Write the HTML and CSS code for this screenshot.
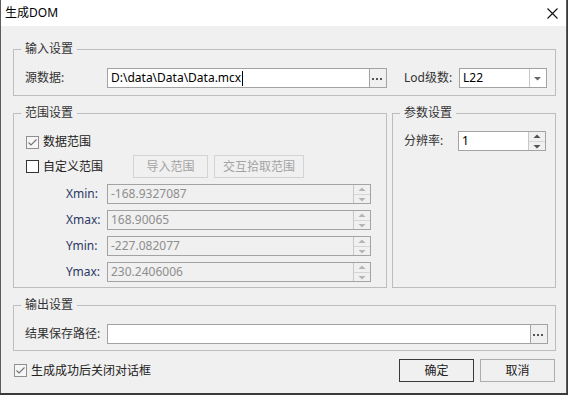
FILE: index.html
```html
<!DOCTYPE html>
<html lang="zh-CN">
<head>
<meta charset="UTF-8">
<title>生成DOM</title>
<link rel="stylesheet" href="styles.css">
</head>
<body>

<div class="dialog">
    <div class="titlebar">
        <span class="title">生成DOM</span>
        <svg class="close" width="11" height="11" viewBox="0 0 11 11">
            <path d="M0.5 0.5 L10.5 10.5 M10.5 0.5 L0.5 10.5" stroke="#111" stroke-width="1.1" fill="none"/>
        </svg>
    </div>

    <div class="content">
        <!-- 输入设置 -->
        <fieldset class="group">
            <legend>输入设置</legend>
            <div class="group-body input-body">
                <span class="label src-label">源数据:</span>
                <div class="field src-field">
                    <span class="field-text">D:\data\Data\Data.mcx</span><span class="caret"></span>
                    <span class="side browse">
                        <svg width="16" height="18" viewBox="0 0 16 18"><rect x="2" y="9" width="2" height="2" fill="#555"/><rect x="6" y="9" width="2" height="2" fill="#555"/><rect x="10" y="9" width="2" height="2" fill="#555"/></svg>
                    </span>
                </div>
                <span class="label lod-label">Lod级数:</span>
                <div class="field lod-field">
                    <span class="field-text">L22</span>
                    <span class="side combo-arrow">
                        <svg width="16" height="18" viewBox="0 0 16 18"><path d="M4 8 H11 L7.5 11.5 Z" fill="#666"/></svg>
                    </span>
                </div>
            </div>
        </fieldset>

        <div class="middle">
            <!-- 范围设置 -->
            <fieldset class="group range-group">
                <legend>范围设置</legend>
                <div class="group-body range-body">
                    <div class="check-row">
                        <span class="check on">
                            <svg width="11" height="11" viewBox="0 0 11 11"><path d="M1.5 5.5 L4 8 L9.5 2.5" stroke="#777" stroke-width="1.2" fill="none"/></svg>
                        </span>
                        <span class="check-text">数据范围</span>
                    </div>
                    <div class="check-row custom-row">
                        <div class="custom-check">
                            <span class="check off"></span>
                            <span class="check-text">自定义范围</span>
                        </div>
                        <span class="btn disabled import-btn">导入范围</span>
                        <span class="btn disabled pick-btn">交互拾取范围</span>
                    </div>
                    <div class="coord-row">
                        <span class="coord-label">Xmin:</span>
                        <div class="field coord-field disabled">
                            <span class="field-text">-168.9327087</span>
                            <span class="side spin"><span class="spin-half"><svg width="16" height="9" viewBox="0 0 16 9"><path d="M4.5 6 H11.5 L8 2.5 Z" fill="#b4b4b4"/></svg></span><span class="spin-half"><svg width="16" height="9" viewBox="0 0 16 9"><path d="M4.5 3 H11.5 L8 6.5 Z" fill="#b4b4b4"/></svg></span></span>
                        </div>
                    </div>
                    <div class="coord-row">
                        <span class="coord-label">Xmax:</span>
                        <div class="field coord-field disabled">
                            <span class="field-text">168.90065</span>
                            <span class="side spin"><span class="spin-half"><svg width="16" height="9" viewBox="0 0 16 9"><path d="M4.5 6 H11.5 L8 2.5 Z" fill="#b4b4b4"/></svg></span><span class="spin-half"><svg width="16" height="9" viewBox="0 0 16 9"><path d="M4.5 3 H11.5 L8 6.5 Z" fill="#b4b4b4"/></svg></span></span>
                        </div>
                    </div>
                    <div class="coord-row">
                        <span class="coord-label">Ymin:</span>
                        <div class="field coord-field disabled">
                            <span class="field-text">-227.082077</span>
                            <span class="side spin"><span class="spin-half"><svg width="16" height="9" viewBox="0 0 16 9"><path d="M4.5 6 H11.5 L8 2.5 Z" fill="#b4b4b4"/></svg></span><span class="spin-half"><svg width="16" height="9" viewBox="0 0 16 9"><path d="M4.5 3 H11.5 L8 6.5 Z" fill="#b4b4b4"/></svg></span></span>
                        </div>
                    </div>
                    <div class="coord-row">
                        <span class="coord-label">Ymax:</span>
                        <div class="field coord-field disabled">
                            <span class="field-text">230.2406006</span>
                            <span class="side spin"><span class="spin-half"><svg width="16" height="9" viewBox="0 0 16 9"><path d="M4.5 6 H11.5 L8 2.5 Z" fill="#b4b4b4"/></svg></span><span class="spin-half"><svg width="16" height="9" viewBox="0 0 16 9"><path d="M4.5 3 H11.5 L8 6.5 Z" fill="#b4b4b4"/></svg></span></span>
                        </div>
                    </div>
                </div>
            </fieldset>

            <!-- 参数设置 -->
            <fieldset class="group param-group">
                <legend>参数设置</legend>
                <div class="group-body param-body">
                    <span class="label res-label">分辨率:</span>
                    <div class="field res-field">
                        <span class="field-text">1</span>
                        <span class="side spin"><span class="spin-half"><svg width="16" height="9" viewBox="0 0 16 9"><path d="M4.5 6 H11.5 L8 2.5 Z" fill="#505050"/></svg></span><span class="spin-half"><svg width="16" height="9" viewBox="0 0 16 9"><path d="M4.5 3 H11.5 L8 6.5 Z" fill="#505050"/></svg></span></span>
                    </div>
                </div>
            </fieldset>
        </div>

        <!-- 输出设置 -->
        <fieldset class="group output-group">
            <legend>输出设置</legend>
            <div class="group-body output-body">
                <span class="label src-label">结果保存路径:</span>
                <div class="field out-field">
                    <span class="field-text"></span>
                    <span class="side browse">
                        <svg width="16" height="18" viewBox="0 0 16 18"><rect x="2" y="9" width="2" height="2" fill="#555"/><rect x="6" y="9" width="2" height="2" fill="#555"/><rect x="10" y="9" width="2" height="2" fill="#555"/></svg>
                    </span>
                </div>
            </div>
        </fieldset>

        <div class="footer">
            <div class="close-check">
                <span class="check on">
                    <svg width="11" height="11" viewBox="0 0 11 11"><path d="M1.5 5.5 L4 8 L9.5 2.5" stroke="#777" stroke-width="1.2" fill="none"/></svg>
                </span>
                <span class="check-text">生成成功后关闭对话框</span>
            </div>
            <div class="footer-buttons">
                <span class="btn default">确定</span>
                <span class="btn">取消</span>
            </div>
        </div>
    </div>
</div>

</body>
</html>
```

FILE: styles.css
```css
html, body {
    margin: 0;
    padding: 0;
}
body {
    background: #3a3a3a;
    font-family: "Noto Sans", "Noto Sans CJK SC", sans-serif;
    font-size: 12px;
    color: #222;
}
.dialog {
    width: 567px;
    height: 393px;
    box-sizing: border-box;
    border-left: 1px solid #5c5c5c;
    border-right: 1px solid #5c5c5c;
    background: #f0f0f0;
}
.titlebar {
    height: 26px;
    background: #fff;
    display: flex;
    align-items: center;
    justify-content: space-between;
    padding-left: 4px;
}
.title {
    line-height: 16px;
    color: #000;
}
.close {
    margin-right: 8px;
}
.content {
    padding: 0 10px 0 12px;
}

/* group boxes */
.group {
    margin: 15px 0 0 0;
    padding: 0;
    border: 1px solid #bdbdbd;
    min-width: 0;
}
.group legend {
    margin-left: 7px;
    padding: 0 4px;
    line-height: 16px;
    color: #333;
}
.group-body {
    display: flex;
    align-items: center;
}
.input-body {
    padding: 11px 7px 7px 11px;
}
.middle {
    display: flex;
    gap: 5px;
    margin-top: 9px;
}
.middle .group {
    margin-top: 0;
}
.range-group {
    width: 374px;
    box-sizing: border-box;
}
.param-group {
    flex: 1;
}
.range-body {
    flex-direction: column;
    align-items: flex-start;
    padding: 11px 0 5px 12px;
}
.param-body {
    padding: 10px 0 0 11px;
}
.output-group {
    margin-top: 9px;
}
.output-body {
    padding: 11px 0 6px 11px;
}

/* labels and fields */
.label {
    line-height: 16px;
    color: #333;
}
.src-label {
    width: 82px;
}
.lod-label {
    width: 55px;
    margin-left: 17px;
}
.res-label {
    width: 54px;
}
.field {
    height: 20px;
    box-sizing: border-box;
    border: 1px solid #a3a3a3;
    background: #fff;
    display: flex;
    align-items: center;
    color: #000;
}
.field-text {
    padding-left: 3px;
    line-height: 16px;
    white-space: nowrap;
}
.caret {
    width: 1px;
    height: 15px;
    background: #000;
    margin-left: 1px;
}
.side {
    margin-left: auto;
    width: 17px;
    height: 18px;
    box-sizing: border-box;
    border-left: 1px solid #c8c8c8;
    background: #f0f0f0;
    display: flex;
}
.browse {
    border-left-color: #a3a3a3;
}
.combo-arrow {
    border-left-color: #c8c8c8;
    background: #fff;
}
.spin {
    flex-direction: column;
}
.spin-half {
    height: 9px;
    display: flex;
}
.spin-half + .spin-half {
    border-top: 1px solid #d6d6d6;
    height: 8px;
    overflow: hidden;
}
.src-field {
    width: 280px;
}
.lod-field {
    width: 88px;
}
.res-field {
    width: 88px;
}
.out-field {
    width: 441px;
}
.coord-field {
    width: 264px;
}
.field.disabled {
    background: #f0f0f0;
    color: #8e8e8e;
}

/* check boxes */
.check-row {
    display: flex;
    align-items: center;
    height: 20px;
}
.custom-row {
    height: 23px;
    margin-top: 3px;
}
.custom-check {
    display: flex;
    align-items: center;
    width: 107px;
}
.check {
    width: 13px;
    height: 13px;
    box-sizing: border-box;
    border: 1px solid #909090;
    background: #f6f6f6;
    display: flex;
}
.check.off {
    border-color: #333;
    background: #fff;
}
.check-text {
    margin-left: 4px;
    line-height: 16px;
    color: #222;
}

/* coordinate rows */
.coord-row {
    display: flex;
    align-items: center;
    margin-top: 6px;
    margin-left: 40px;
}
.coord-label {
    width: 41px;
    line-height: 16px;
    color: #2b3866;
}

/* buttons */
.btn {
    height: 23px;
    box-sizing: border-box;
    border: 1px solid #adadad;
    background: #f0f0f0;
    display: flex;
    align-items: center;
    justify-content: center;
    width: 75px;
    line-height: 16px;
    color: #222;
}
.btn.default {
    border-color: #3a3a3a;
}
.btn.disabled {
    border-color: #d4d4d4;
    color: #a3a3a3;
}
.pick-btn {
    width: 90px;
    margin-left: 6px;
}

/* footer */
.footer {
    display: flex;
    align-items: center;
    margin-top: 8px;
}
.close-check {
    display: flex;
    align-items: center;
    margin-left: 1px;
}
.footer-buttons {
    display: flex;
    gap: 6px;
    margin-left: auto;
    margin-right: 1px;
}
```
